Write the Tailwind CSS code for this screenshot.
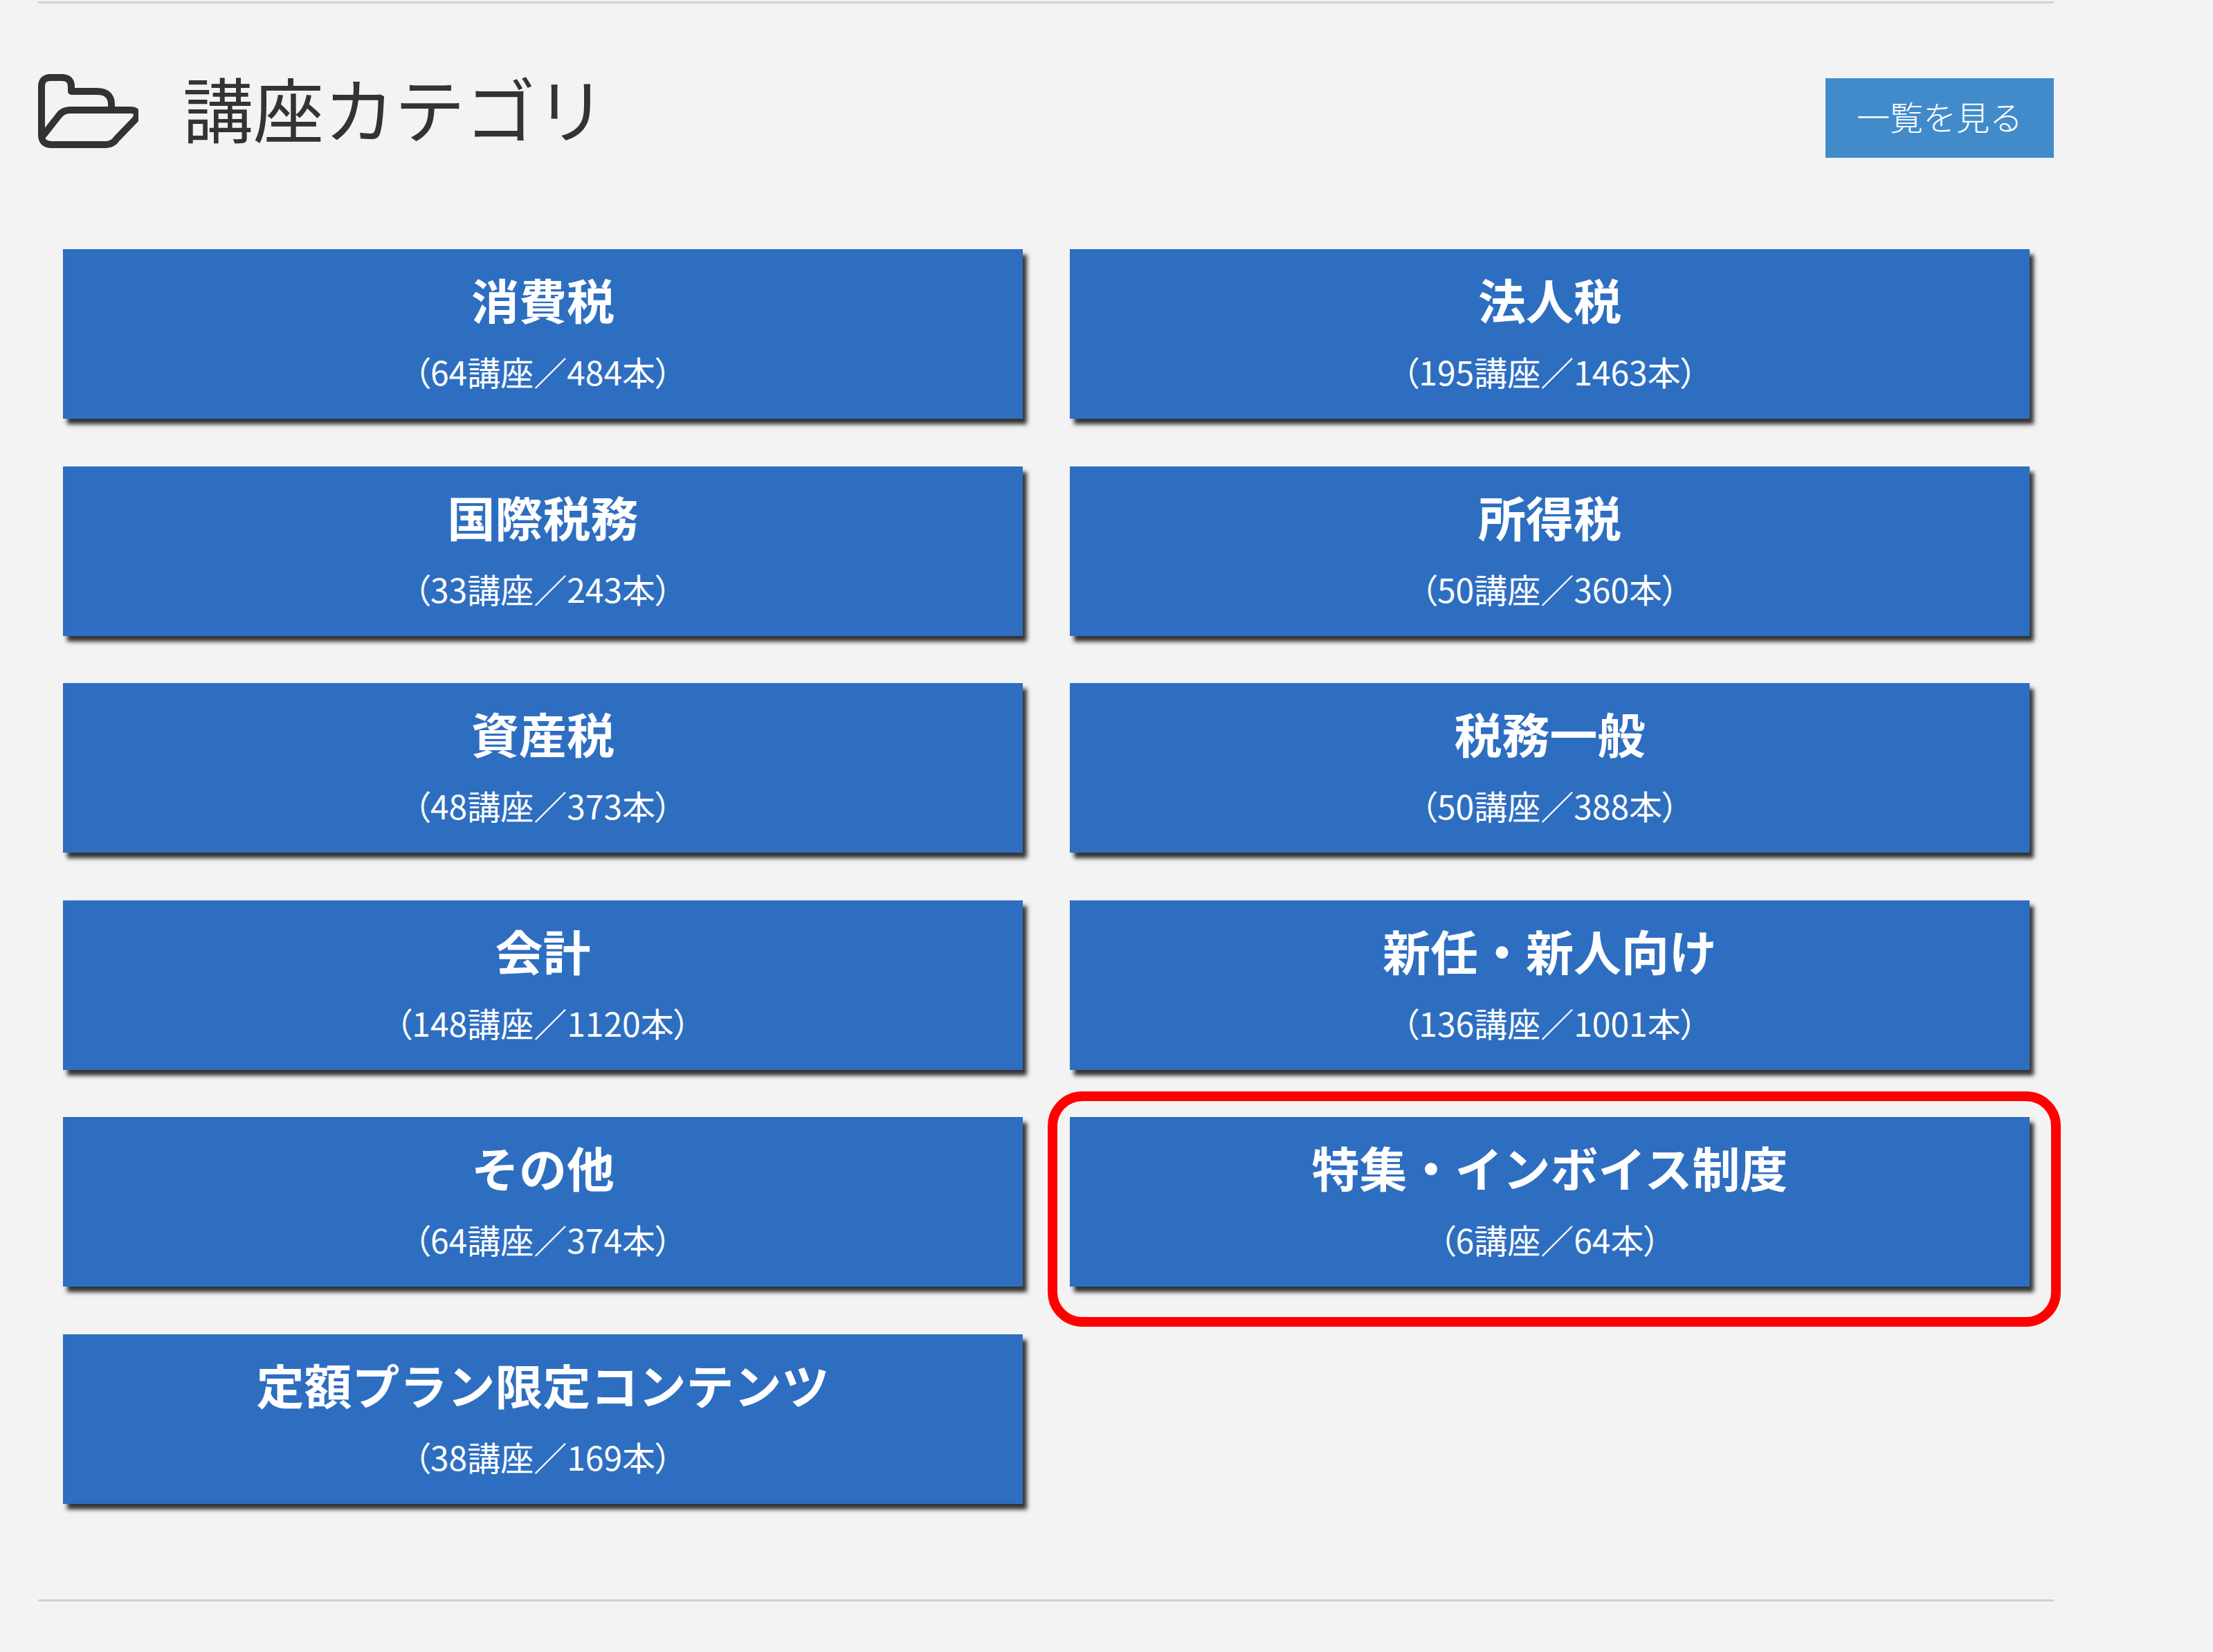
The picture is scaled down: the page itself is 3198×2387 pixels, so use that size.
<!DOCTYPE html>
<html lang="ja">
<head>
    <meta charset="UTF-8">
    <title>講座カテゴリ</title>
    <script src="https://cdn.jsdelivr.net/npm/@tailwindcss/browser@4"></script>
</head>
<body class="bg-[#f3f3f3] h-[2387px] overflow-hidden font-['Noto_Sans_CJK_JP','Noto_Sans',sans-serif]">
<div class="w-[2913px] ml-[55px] pt-[2px]">
    <div class="border-t-[3px] border-[#d2d2d2]"></div>

    <!-- Heading -->
    <div class="flex justify-between items-start pt-[102px]">
        <div class="flex items-center gap-[64px] h-[107px]">
            <svg class="w-[145px] h-[107px]" viewBox="0 0 145 107" fill="none" stroke="#333" stroke-width="10" stroke-linejoin="round" stroke-linecap="round">
                <path d="M8 88 L30 60 Q36 52 46 52 H133 Q147 52 141 65 L114 93 Q108 102 98 102 H20 Q5 102 5 88 V18 Q5 5 18 5 H34 Q48 5 48 18 V25 H85 Q106 25 106 44 V52"/>
            </svg>
            <h2 class="text-[102px] leading-none pb-[12px] font-normal text-[#333]">講座カテゴリ</h2>
        </div>
        <a class="w-[330px] h-[115px] mt-[6px] pb-[8px] bg-[#428bca] text-white text-[48px] font-light flex items-center justify-center">一覧を見る</a>
    </div>

    <!-- Category cards -->
    <div class="grid grid-cols-2 gap-x-[68px] gap-y-[68.6px] w-[2842px] ml-[36px] mt-[132px]">
        <a class="h-[245px] bg-[#2e6ec1] text-white text-center pt-[28px] shadow-[6px_8px_6px_#333]"><p class="text-[69px] leading-[88px] font-bold">消費税</p><p class="text-[48px] leading-[72px] mt-[24px] [font-feature-settings:'palt']">（64講座／484本）</p></a>
        <a class="h-[245px] bg-[#2e6ec1] text-white text-center pt-[28px] shadow-[6px_8px_6px_#333]"><p class="text-[69px] leading-[88px] font-bold">法人税</p><p class="text-[48px] leading-[72px] mt-[24px] [font-feature-settings:'palt']">（195講座／1463本）</p></a>
        <a class="h-[245px] bg-[#2e6ec1] text-white text-center pt-[28px] shadow-[6px_8px_6px_#333]"><p class="text-[69px] leading-[88px] font-bold">国際税務</p><p class="text-[48px] leading-[72px] mt-[24px] [font-feature-settings:'palt']">（33講座／243本）</p></a>
        <a class="h-[245px] bg-[#2e6ec1] text-white text-center pt-[28px] shadow-[6px_8px_6px_#333]"><p class="text-[69px] leading-[88px] font-bold">所得税</p><p class="text-[48px] leading-[72px] mt-[24px] [font-feature-settings:'palt']">（50講座／360本）</p></a>
        <a class="h-[245px] bg-[#2e6ec1] text-white text-center pt-[28px] shadow-[6px_8px_6px_#333]"><p class="text-[69px] leading-[88px] font-bold">資産税</p><p class="text-[48px] leading-[72px] mt-[24px] [font-feature-settings:'palt']">（48講座／373本）</p></a>
        <a class="h-[245px] bg-[#2e6ec1] text-white text-center pt-[28px] shadow-[6px_8px_6px_#333]"><p class="text-[69px] leading-[88px] font-bold">税務一般</p><p class="text-[48px] leading-[72px] mt-[24px] [font-feature-settings:'palt']">（50講座／388本）</p></a>
        <a class="h-[245px] bg-[#2e6ec1] text-white text-center pt-[28px] shadow-[6px_8px_6px_#333]"><p class="text-[69px] leading-[88px] font-bold">会計</p><p class="text-[48px] leading-[72px] mt-[24px] [font-feature-settings:'palt']">（148講座／1120本）</p></a>
        <a class="h-[245px] bg-[#2e6ec1] text-white text-center pt-[28px] shadow-[6px_8px_6px_#333]"><p class="text-[69px] leading-[88px] font-bold">新任・新人向け</p><p class="text-[48px] leading-[72px] mt-[24px] [font-feature-settings:'palt']">（136講座／1001本）</p></a>
        <a class="h-[245px] bg-[#2e6ec1] text-white text-center pt-[28px] shadow-[6px_8px_6px_#333]"><p class="text-[69px] leading-[88px] font-bold">その他</p><p class="text-[48px] leading-[72px] mt-[24px] [font-feature-settings:'palt']">（64講座／374本）</p></a>
        <a class="relative h-[245px] bg-[#2e6ec1] text-white text-center pt-[28px] shadow-[6px_8px_6px_#333]">
            <p class="text-[69px] leading-[88px] font-bold">特集・インボイス制度</p><p class="text-[48px] leading-[72px] mt-[24px] [font-feature-settings:'palt']">（6講座／64本）</p>
            <!-- red highlight -->
            <span class="absolute left-[-32px] right-[-45px] top-[-37px] bottom-[-58px] border-[14px] border-[#ff0000] rounded-[50px]"></span>
        </a>
        <a class="h-[245px] bg-[#2e6ec1] text-white text-center pt-[28px] shadow-[6px_8px_6px_#333]"><p class="text-[69px] leading-[88px] font-bold">定額プラン限定コンテンツ</p><p class="text-[48px] leading-[72px] mt-[24px] [font-feature-settings:'palt']">（38講座／169本）</p></a>
    </div>

    <div class="border-t-[3px] border-[#d2d2d2] mt-[138px]"></div>
</div>
</body>
</html>
